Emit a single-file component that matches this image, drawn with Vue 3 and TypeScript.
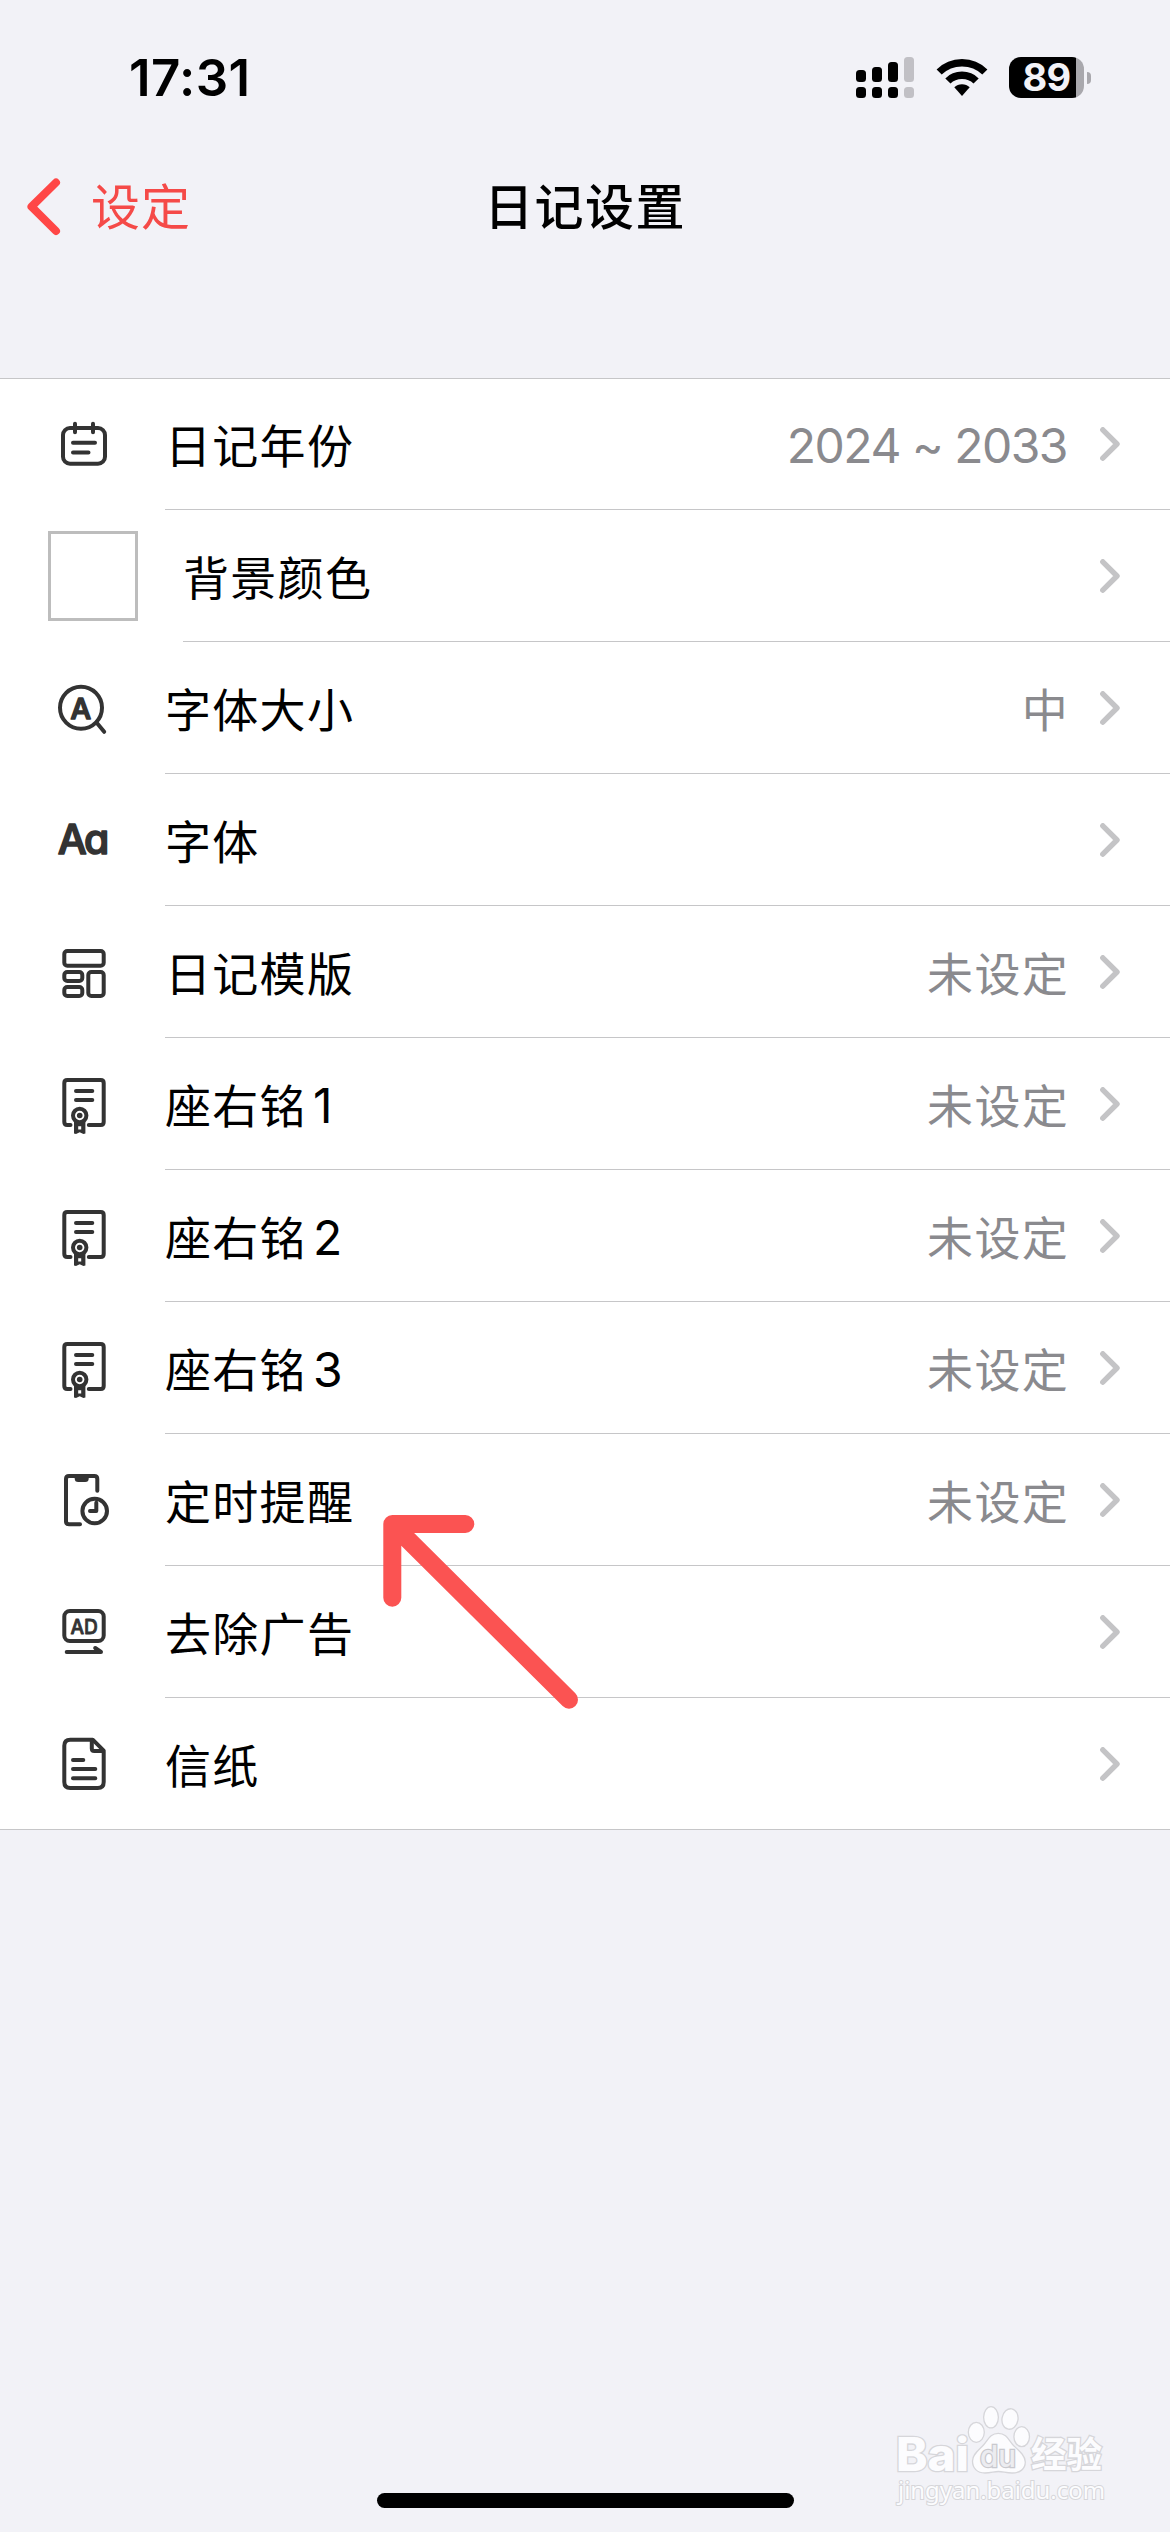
<script setup lang="ts">
type IconName = 'calendar' | 'swatch' | 'size' | 'font' | 'template' | 'motto' | 'remind' | 'ad' | 'paper'

interface Row {
  icon: IconName
  label: string
  index?: number
  value?: string
}

const rows: Row[] = [
  { icon: 'calendar', label: '日记年份', value: '2024 ~ 2033' },
  { icon: 'swatch', label: '背景颜色' },
  { icon: 'size', label: '字体大小', value: '中' },
  { icon: 'font', label: '字体' },
  { icon: 'template', label: '日记模版', value: '未设定' },
  { icon: 'motto', label: '座右铭', index: 1, value: '未设定' },
  { icon: 'motto', label: '座右铭', index: 2, value: '未设定' },
  { icon: 'motto', label: '座右铭', index: 3, value: '未设定' },
  { icon: 'remind', label: '定时提醒', value: '未设定' },
  { icon: 'ad', label: '去除广告' },
  { icon: 'paper', label: '信纸' },
]
</script>

<template>
  <div class="screen">
    <header class="status">
      <span class="time">17:31</span>
      <div class="indicators">
        <svg class="signal" width="58" height="41" viewBox="0 0 58 41">
          <rect x="0" y="13" width="10" height="12" rx="3.5" />
          <rect x="16" y="10" width="10" height="15" rx="3.5" />
          <rect x="32" y="5" width="10" height="20" rx="3.5" />
          <rect class="dim" x="48" y="0" width="10" height="25" rx="3.5" />
          <rect x="0" y="30" width="10" height="11" rx="3.5" />
          <rect x="16" y="30" width="10" height="11" rx="3.5" />
          <rect x="32" y="30" width="10" height="11" rx="3.5" />
          <rect class="dim" x="48" y="30" width="10" height="11" rx="3.5" />
        </svg>
        <svg class="wifi" width="52" height="41" viewBox="0 0 52 41">
          <path d="M0.6 12.6Q11 2 26 2T51.4 12.6L46.3 17.6Q38 9.5 26 9.5T5.7 17.6Z" />
          <path d="M9.3 21.4Q16 14.6 26 14.6T42.7 21.4L37.5 26.6Q33 22 26 22T14.5 26.6Z" />
          <path d="M18.3 30.3Q21.5 27.2 26 27.2T33.7 30.3L26 39Z" />
        </svg>
        <div class="battery">
          <div class="cell"><span>89</span></div>
          <div class="nub"></div>
        </div>
      </div>
    </header>

    <nav class="nav">
      <div class="back">
        <svg width="34" height="58" viewBox="0 0 34 58">
          <path d="M29 4.5L4.5 28.7L29 53" />
        </svg>
        <span>设定</span>
      </div>
      <h1>日记设置</h1>
    </nav>

    <main class="list">
      <div v-for="(row, i) in rows" :key="i" class="row">
        <div v-if="row.icon === 'swatch'" class="swatch"></div>
        <svg v-else class="icon" width="72" height="72" viewBox="0 0 72 72">
          <g v-if="row.icon === 'calendar'">
            <rect x="15" y="20" width="42" height="35.7" rx="7" />
            <path d="M27 15.7V24.3M45 15.7V24.3M25 34.8H47M25 44.5H40.5" />
          </g>
          <g v-else-if="row.icon === 'size'">
            <circle cx="33" cy="35.8" r="21" />
            <path d="M48.5 50.5L56.2 59.8" />
            <text x="32.8" y="47" font-size="29" text-anchor="middle">A</text>
          </g>
          <g v-else-if="row.icon === 'font'">
            <text class="aa" x="9.8" y="49.8" font-size="41" textLength="51.5" lengthAdjust="spacing">Aa</text>
          </g>
          <g v-else-if="row.icon === 'template'">
            <rect x="16.3" y="15" width="39.4" height="14.7" rx="3" />
            <rect x="16.3" y="36" width="18" height="9" rx="3" />
            <rect x="16.3" y="51" width="18" height="9" rx="3" />
            <rect x="40.3" y="36" width="15.4" height="24" rx="3" />
          </g>
          <g v-else-if="row.icon === 'motto'">
            <path d="M22.5 57H19.3Q16.3 57 16.3 54V15Q16.3 12 19.3 12H52.7Q55.7 12 55.7 15V54Q55.7 57 52.7 57H40.8" />
            <path d="M28 23H44.3M28 32H44.3" />
            <circle cx="31.7" cy="47.5" r="6.7" />
            <circle class="solid" cx="31.7" cy="47.5" r="2.8" />
            <path class="solid" fill-rule="evenodd" d="M26 54H37.4V65.4L35.4 66L31.7 64.2L28 66L26 65.4ZM30.2 58.2V61.6H33.2V58.2Z" />
          </g>
          <g v-else-if="row.icon === 'remind'">
            <path d="M32 60.3H21Q18 60.3 18 57.3V15Q18 12 21 12H46.3Q49.3 12 49.3 15V26.7" />
            <path class="solid" d="M26.7 13H40.7V14.5Q40.7 18 37.2 18H30.2Q26.7 18 26.7 14.5Z" />
            <circle cx="46.7" cy="47" r="12.3" />
            <path d="M48.3 38.7V47H42" />
          </g>
          <g v-else-if="row.icon === 'ad'">
            <rect x="16.3" y="15" width="39.4" height="30" rx="5.5" />
            <text class="small" x="22.4" y="37.6" font-size="20.5" textLength="27.4" lengthAdjust="spacingAndGlyphs">AD</text>
            <path d="M18.7 56H53L47.2 52" />
          </g>
          <g v-else>
            <path d="M44.7 11.7H22.3Q16.3 11.7 16.3 17.7V54Q16.3 60 22.3 60H49.7Q55.7 60 55.7 54V22.6Z" />
            <path d="M43.8 13V20.5Q43.8 23 46.3 23H55" />
            <path d="M25 32H35.3M25 41H47.3M25 50.2H47.3" />
          </g>
        </svg>
        <div class="body">
          <span class="label">{{ row.label }}<span v-if="row.index" class="index">{{ row.index }}</span></span>
          <span class="value" :class="{ years: row.icon === 'calendar' }">{{ row.value }}</span>
          <svg class="chevron" width="20" height="34" viewBox="0 0 20 34">
            <path d="M2.8 2.8L17 17L2.8 31.2" />
          </svg>
        </div>
      </div>
    </main>

    <footer class="foot"><div class="home"></div></footer>

    <svg class="pointer" width="200" height="200" viewBox="0 0 200 200">
      <path d="M92 19H19V92.7M19 19L195.7 194.7" transform="translate(-6.7 -5)" />
    </svg>

    <svg class="watermark" width="230" height="112" viewBox="0 0 230 112">
      <text class="mark" x="6" y="71" font-size="46" textLength="73" lengthAdjust="spacingAndGlyphs">Bai</text>
      <ellipse cx="86.3" cy="32.3" rx="8" ry="10" />
      <ellipse cx="101" cy="17.3" rx="7.4" ry="10.6" />
      <ellipse cx="120" cy="19" rx="8" ry="10.3" transform="rotate(10 120 19)" />
      <ellipse cx="131.7" cy="36.7" rx="7.8" ry="10" />
      <path d="M108.3 33.4C117 33.4 119 41 124 46C130 51.5 135.3 56 135.3 62C135.3 69 130 73 122 73C116 73 113 71.5 108.5 71.5S101 73 95 73C87 73 82.5 68 82.5 61C82.5 54 89 50 93.5 45C98 40 100 33.4 108.3 33.4Z" />
      <text class="du" x="90" y="67" font-size="30" textLength="36" lengthAdjust="spacingAndGlyphs">du</text>
      <text class="cjk" x="141" y="68" font-size="36" textLength="71" lengthAdjust="spacingAndGlyphs">经验</text>
      <text class="url" x="8" y="99" font-size="23.5" textLength="207" lengthAdjust="spacingAndGlyphs">jingyan.baidu.com</text>
    </svg>
  </div>
</template>

<style>
body {
  background: #f2f2f7;
}
</style>

<style scoped>
.screen {
  position: relative;
  display: flex;
  flex-direction: column;
  box-sizing: border-box;
  width: 1170px;
  height: 2532px;
  overflow: hidden;
  background: #f2f2f7;
  color: #000;
  font-family: Inter, "Noto Sans CJK SC", sans-serif;
}

.status {
  display: flex;
  justify-content: space-between;
  align-items: center;
  height: 155px;
  box-sizing: border-box;
  padding: 0 79px 0 129px;
}

.time {
  font-size: 51px;
  font-weight: 600;
  line-height: 60px;
  letter-spacing: 0.4px;
}

.indicators {
  display: flex;
  align-items: center;
}

.signal .dim {
  fill: #c1c0c5;
}

.wifi {
  margin-left: 22px;
}

.battery {
  display: flex;
  align-items: center;
  margin-left: 21px;
}

.cell {
  display: flex;
  align-items: center;
  justify-content: center;
  width: 75px;
  height: 41px;
  border-radius: 12px;
  background: linear-gradient(to right, #000 67px, #a9a8ad 67px);
  color: #f2f2f7;
}

.cell span {
  font-size: 38px;
  font-weight: 700;
  line-height: 41px;
  letter-spacing: -0.8px;
}

.nub {
  width: 4px;
  height: 12px;
  margin-left: 3px;
  border-radius: 0 4px 4px 0;
  background: #a9a8ad;
}

.nav {
  display: grid;
  grid-template-columns: 1fr auto 1fr;
  align-items: center;
  height: 103px;
  margin-bottom: 120px;
}

.back {
  display: flex;
  align-items: center;
  padding-left: 27px;
  color: #f54a48;
}

.back path {
  fill: none;
  stroke: #ff4746;
  stroke-width: 8;
  stroke-linecap: round;
  stroke-linejoin: round;
}

.back span {
  margin-left: 30px;
  padding-top: 2px;
  font-size: 49px;
  line-height: 60px;
  letter-spacing: 1px;
}

h1 {
  margin: 0;
  padding-top: 2px;
  font-size: 49px;
  font-weight: 500;
  line-height: 60px;
  letter-spacing: 1.4px;
}

.list {
  background: #fff;
  box-shadow: inset 0 1px #c6c6c8;
}

.row {
  display: flex;
  align-items: center;
  height: 132px;
  padding-left: 48px;
}

.row:last-child {
  box-shadow: inset 0 -1px #c6c6c8;
}

.row:last-child .body {
  box-shadow: none;
}

.icon {
  flex: none;
}

.icon rect,
.icon path,
.icon circle {
  fill: none;
  stroke: #333;
  stroke-width: 4;
  stroke-linecap: round;
  stroke-linejoin: round;
}

.icon .solid {
  fill: #333;
  stroke: none;
}

.icon text {
  fill: #333;
  stroke: #333;
  stroke-width: 1.6;
  stroke-linejoin: round;
  font-weight: 500;
  font-feature-settings: "cv11";
}

.icon .small {
  stroke-width: 0.8;
}

.swatch {
  width: 90px;
  height: 90px;
  box-sizing: border-box;
  border: 3px solid #bdbdbd;
}

.body {
  display: flex;
  flex: 1;
  align-items: center;
  height: 132px;
  margin-left: 45px;
  padding-right: 50px;
  box-shadow: inset 0 -1px #c6c6c8;
}

.label,
.value {
  padding-top: 3px;
  font-size: 46px;
  line-height: 60px;
  letter-spacing: 1.3px;
}

.index {
  margin-left: 6px;
  font-size: 48px;
}

.value {
  margin-left: auto;
  margin-right: 31px;
  color: #8a8a8e;
}

.value.years {
  margin-right: 33px;
  font-size: 48px;
  letter-spacing: -1.5px;
}

.chevron path {
  fill: none;
  stroke: #c4c4c6;
  stroke-width: 5.4;
  stroke-linecap: round;
  stroke-linejoin: round;
}

.foot {
  display: flex;
  flex: 1;
  align-items: flex-end;
  justify-content: center;
  padding-bottom: 24px;
}

.home {
  width: 417px;
  height: 15px;
  border-radius: 8px;
  background: #000;
}

.pointer {
  position: absolute;
  left: 380px;
  top: 1510px;
}

.pointer path {
  fill: none;
  stroke: #fb5352;
  stroke-width: 18;
  stroke-linecap: round;
  stroke-linejoin: round;
}

.watermark {
  position: absolute;
  left: 890px;
  top: 2400px;
  fill: #fcfcfe;
  stroke: #d6d6da;
  stroke-width: 1.3;
}

.watermark text {
  paint-order: stroke;
  stroke-width: 2.6;
}

.watermark .mark {
  font-weight: 800;
}

.watermark .du {
  font-weight: 500;
  fill: #ececf0;
  stroke: #c9c9ce;
}

.watermark .cjk {
  font-weight: 700;
}

.watermark .url {
  font-family: "Noto Sans", sans-serif;
  stroke-width: 2;
}
</style>
